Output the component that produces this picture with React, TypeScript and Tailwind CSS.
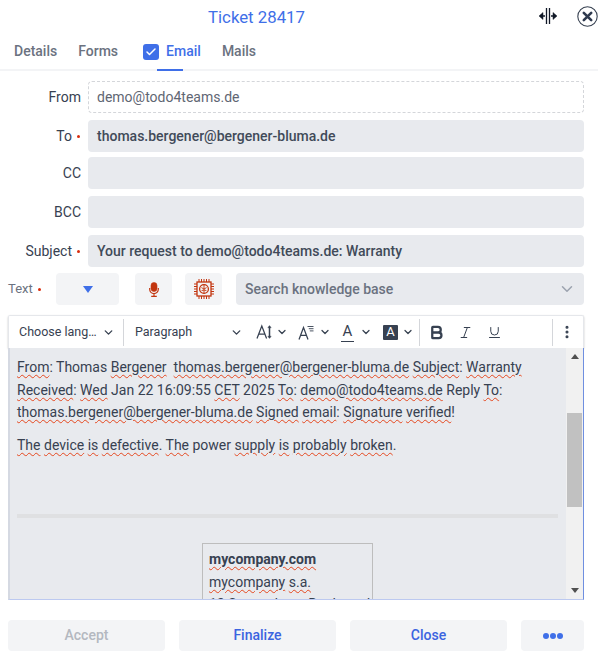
import { ChevronDown, MoreVertical, Check, Bold, Italic, Underline } from "lucide-react";

const W = ({ children }: { children: React.ReactNode }) => (
  <span className="underline decoration-wavy decoration-[#e5481f] decoration-1 underline-offset-2">{children}</span>
);

function Field({ label, value, required, dashed, mb }: { label: string; value?: string; required?: boolean; dashed?: boolean; mb: string }) {
  return (
    <div className={`flex h-[32px] items-center ${mb}`}>
      <div className="flex w-[88px] items-center justify-end pr-[7px] text-[14px] text-[#374151]">
        {label}
        {required && <span className="ml-[5px] mr-[1px] h-[3px] w-[3px] rounded-full bg-[#d92d0e]" />}
      </div>
      <div
        className={
          dashed
            ? "flex h-full w-[496px] items-center rounded-[4px] border border-dashed border-[#d4d6da] px-2 text-[14px] text-[#5f6673]"
            : "flex h-full w-[496px] items-center rounded-[4px] bg-[#e8eaee] px-[9px] text-[14px] font-medium text-[#414a59]"
        }
      >
        {value}
      </div>
    </div>
  );
}

function FontSizeIcon() {
  return (
    <svg width="20" height="16" viewBox="0 0 20 16" fill="none" stroke="#374151" strokeWidth="1.25">
      <path d="M1 14.5 5.8 2 10.6 14.5M2.7 10.2h6.2" />
      <path d="M13.5 2.5v11" strokeWidth="1.5" />
      <path d="M11.8 3.8 13.5 1.6l1.7 2.2zM11.8 12.2l1.7 2.2 1.7-2.2z" fill="#374151" strokeWidth="0.4" />
    </svg>
  );
}

function LineHeightIcon() {
  return (
    <svg width="17" height="15" viewBox="0 0 17 15" fill="none" stroke="#374151" strokeWidth="1.25">
      <path d="M1 14.5 5.5 2.5 10 14.5M2.6 10.4h5.8" />
      <path d="M9.5 1.5h6M10.8 3.7h4.7M11.8 5.9h3.7" strokeWidth="0.9" />
    </svg>
  );
}

function MicIcon() {
  return (
    <svg width="10" height="15" viewBox="0 0 10 15" fill="none" stroke="#c2350f">
      <rect x="2" y="0.5" width="6" height="9" rx="3" fill="#c2350f" strokeWidth="0.6" />
      <path d="M0.7 6v1.3a4.3 4.3 0 0 0 8.6 0V6M5 11.6V14M2.2 14.4h5.6" strokeWidth="1.2" />
    </svg>
  );
}

function ChipBrain() {
  return (
    <svg width="22" height="22" viewBox="0 0 22 22" fill="none" stroke="#c2350f" strokeWidth="1.3">
      <rect x="4" y="4" width="14" height="14" />
      <circle cx="11" cy="11" r="4.4" />
      <path d="M11 6.6v8.8M8.4 9.6 11 11M13.6 9.6 11 11M8.6 12.6l2.4-.6M13.4 12.6l-2.4-.6" strokeWidth="0.9" />
      <path d="M6 1v3M8.5 1v3M11 1v3M13.5 1v3M16 1v3M6 18v3M8.5 18v3M11 18v3M13.5 18v3M16 18v3M1 6h3M1 8.5h3M1 11h3M1 13.5h3M1 16h3M18 6h3M18 8.5h3M18 11h3M18 13.5h3M18 16h3" strokeWidth="1" />
    </svg>
  );
}

function Sep() {
  return <div className="h-[27px] w-[1px] bg-[#d4d6da]" />;
}

function ActionButton({ children, muted, w }: { children: React.ReactNode; muted?: boolean; w: string }) {
  return (
    <button className={`flex h-[31px] ${w} items-center justify-center rounded-[4px] bg-[#f3f4f6] text-[14px] font-medium ${muted ? "text-[#b4b8c0]" : "text-[#3b64e0]"}`}>
      {children}
    </button>
  );
}

export default function App() {
  return (
    <div className="h-[664px] w-[598px] overflow-hidden bg-white text-[14px] text-[#374151]" style={{ fontFamily: "Roboto, sans-serif" }}>
      {/* header */}
      <div className="relative flex h-[36px] items-center pl-[208px]">
        <span className="text-[16.8px] text-[#3f6fe8]">Ticket 28417</span>
        <svg className="absolute left-[538px] top-[7px]" width="20" height="18" viewBox="0 0 20 18" fill="#111827" stroke="#111827">
          <path d="M8.5 1v16M11.5 1v16" strokeWidth="1.3" fill="none" />
          <path d="M1 9l4-3.5v7zM19 9l-4-3.5v7z" strokeWidth="0.5" />
          <path d="M3 9h4M13 9h4" strokeWidth="1.4" />
        </svg>
        <svg className="absolute left-[577px] top-[6px]" width="21" height="21" viewBox="0 0 21 21" fill="none">
          <circle cx="10.5" cy="10.5" r="9.7" stroke="#374151" strokeWidth="1.1" />
          <path d="M6.8 6.8l7.4 7.4M14.2 6.8l-7.4 7.4" stroke="#2f3a4f" strokeWidth="2.6" strokeLinecap="round" />
        </svg>
      </div>

      {/* tabs */}
      <div className="flex h-[35px] items-center border-b-2 border-[#f3f4f6] pb-[2px] pl-[14px] font-medium text-[#6b7280]">
        <span className="mr-[21px]">Details</span>
        <span className="mr-[25px]">Forms</span>
        <span className="mr-[7px] flex h-[16px] w-[16px] items-center justify-center rounded-[3px] bg-[#3f6fe8]">
          <Check className="h-[12px] w-[12px] text-white" strokeWidth={3} />
        </span>
        <span className="relative mr-[21px] text-[#3f6fe8]">
          Email
          <span className="absolute bottom-[-9px] left-[-9px] h-[2px] w-[26px] bg-[#3f6fe8]" />
        </span>
        <span>Mails</span>
      </div>

      {/* address fields */}
      <div className="pt-[10px]">
        <Field label="From" value="demo@todo4teams.de" dashed mb="mb-[7px]" />
        <Field label="To" value="thomas.bergener@bergener-bluma.de" required mb="mb-[5px]" />
        <Field label="CC" mb="mb-[7px]" />
        <Field label="BCC" mb="mb-[7px]" />
        <Field label="Subject" value="Your request to demo@todo4teams.de: Warranty" required mb="mb-[6px]" />
      </div>

      {/* text row */}
      <div className="flex h-[32px] items-center pl-[8px]">
        <span className="w-[25px] text-[13px] text-[#6b7280]">Text</span>
        <span className="ml-[5px] mr-[15px] h-[3px] w-[3px] rounded-full bg-[#d92d0e]" />
        <div className="mr-[16px] flex h-full w-[63px] items-center justify-center rounded-[4px] bg-[#f3f4f6]">
          <svg width="10" height="7" viewBox="0 0 10 7"><path d="M0 0h10L5 7z" fill="#3f6fe8" /></svg>
        </div>
        <div className="mr-[13px] flex h-full w-[37px] items-center justify-center rounded-[4px] bg-[#f3f4f6]">
          <MicIcon />
        </div>
        <div className="mr-[14px] flex h-full w-[37px] items-center justify-center rounded-[4px] bg-[#f3f4f6]">
          <ChipBrain />
        </div>
        <div className="flex h-full w-[348px] items-center justify-between rounded-[4px] bg-[#e8eaee] pl-[9px] pr-[8px] font-medium text-[#6b7280]">
          Search knowledge base
          <ChevronDown className="h-[18px] w-[18px] text-[#9ca3af]" />
        </div>
      </div>

      {/* editor */}
      <div className="ml-[8px] mt-[10px] w-[576px]">
        <div className="flex h-[33px] items-center rounded-t-[2px] border-x border-t border-[#e5e7eb] text-[12.5px] text-[#374151] shadow-[0_1px_2px_rgba(0,0,0,0.25)]">
          <span className="ml-[10px] w-[78px] whitespace-nowrap">Choose lang…</span>
          <ChevronDown className="ml-[5px] mr-[8px] h-[13px] w-[13px]" strokeWidth={2.5} />
          <Sep />
          <span className="ml-[11px] w-[95px]">Paragraph</span>
          <ChevronDown className="mr-[13px] h-[13px] w-[13px]" strokeWidth={2.5} />
          <FontSizeIcon />
          <ChevronDown className="mr-[10px] h-[12px] w-[12px]" strokeWidth={2.5} />
          <LineHeightIcon />
          <ChevronDown className="ml-[4px] mr-[10px] h-[12px] w-[12px]" strokeWidth={2.5} />
          <span className="flex h-[19px] w-[13px] flex-col items-center border-b-[1.5px] border-[#374151] text-[15px] leading-[17px]">A</span>
          <ChevronDown className="ml-[6px] mr-[11px] h-[12px] w-[12px]" strokeWidth={2.5} />
          <span className="flex h-[15px] w-[15px] items-center justify-center rounded-[1px] bg-[#374151] text-[13px] text-white">A</span>
          <ChevronDown className="ml-[4px] mr-[5px] h-[12px] w-[12px]" strokeWidth={2.5} />
          <Sep />
          <Bold className="ml-[8px] h-[17px] w-[17px]" strokeWidth={3.2} />
          <Italic className="ml-[13px] h-[15px] w-[15px]" strokeWidth={1.6} />
          <Underline className="ml-[14px] h-[15px] w-[15px]" strokeWidth={1.6} />
          <div className="ml-[50px]"><Sep /></div>
          <MoreVertical className="ml-[6px] h-[16px] w-[16px]" strokeWidth={2.6} />
        </div>

        <div className="flex h-[252px] border-b border-r border-b-[#bcc9f0] border-r-[#6f8fe0] border-l-[2px] border-l-[#d5d9e2]">
          <div className="flex-1 overflow-hidden bg-[#e8eaee] pl-[7px] pr-[8px] pt-[8px] text-[14px] leading-[22.5px] text-[#374151]">
            <p className="mb-[10px]">
              <W>From</W>: Thomas <W>Bergener</W>&nbsp; <W>thomas.bergener@bergener-bluma.de</W> <W>Subject</W>: <W>Warranty</W>{" "}
              <W>Received</W>: <W>Wed</W> Jan 22 16:09:55 <W>CET</W> 2025 <W>To</W>: <W>demo@todo4teams.de</W> Reply <W>To</W>:{" "}
              <W>thomas.bergener@bergener-bluma.de</W> <W>Signed</W> <W>email</W>: <W>Signature</W> <W>verified</W>!
            </p>
            <p>
              <W>The</W> <W>device</W> <W>is</W> <W>defective</W>. <W>The</W> power <W>supply</W> <W>is</W> <W>probably</W> <W>broken</W>.
            </p>
            <div className="mb-[25px] mt-[58px] h-[4px] bg-[#dfe0e2]" />
            <div className="ml-[185px] h-[100px] w-[171px] whitespace-nowrap border border-[#bdbdbd] px-[6px] pt-[4px]">
              <div className="font-bold"><W>mycompany.com</W></div>
              <div><W>mycompany</W> <W>s.a.</W></div>
              <div>12 Somewhere, Boulevard</div>
            </div>
          </div>
          <div className="flex w-[17px] flex-col bg-[#f1f1f1]">
            <div className="flex h-[17px] items-center justify-center">
              <svg width="8" height="5" viewBox="0 0 8 5"><path d="M4 0l4 5H0z" fill="#505050" /></svg>
            </div>
            <div className="mx-[1px] mt-[48px] h-[94px] bg-[#c1c1c1]" />
            <div className="flex-1" />
            <div className="flex h-[17px] items-center justify-center">
              <svg width="8" height="5" viewBox="0 0 8 5"><path d="M0 0h8L4 5z" fill="#505050" /></svg>
            </div>
          </div>
        </div>
      </div>

      {/* actions */}
      <div className="ml-[8px] mt-[20px] flex gap-[14px]">
        <ActionButton muted w="w-[157px]">Accept</ActionButton>
        <ActionButton w="w-[157px]">Finalize</ActionButton>
        <ActionButton w="w-[157px]">Close</ActionButton>
        <div className="flex h-[31px] w-[63px] items-center justify-center gap-[1px] rounded-[4px] bg-[#f3f4f6]">
          <span className="h-[6px] w-[6px] rounded-full bg-[#3f6fe8]" />
          <span className="h-[6px] w-[6px] rounded-full bg-[#3f6fe8]" />
          <span className="h-[6px] w-[6px] rounded-full bg-[#3f6fe8]" />
        </div>
      </div>
    </div>
  );
}
